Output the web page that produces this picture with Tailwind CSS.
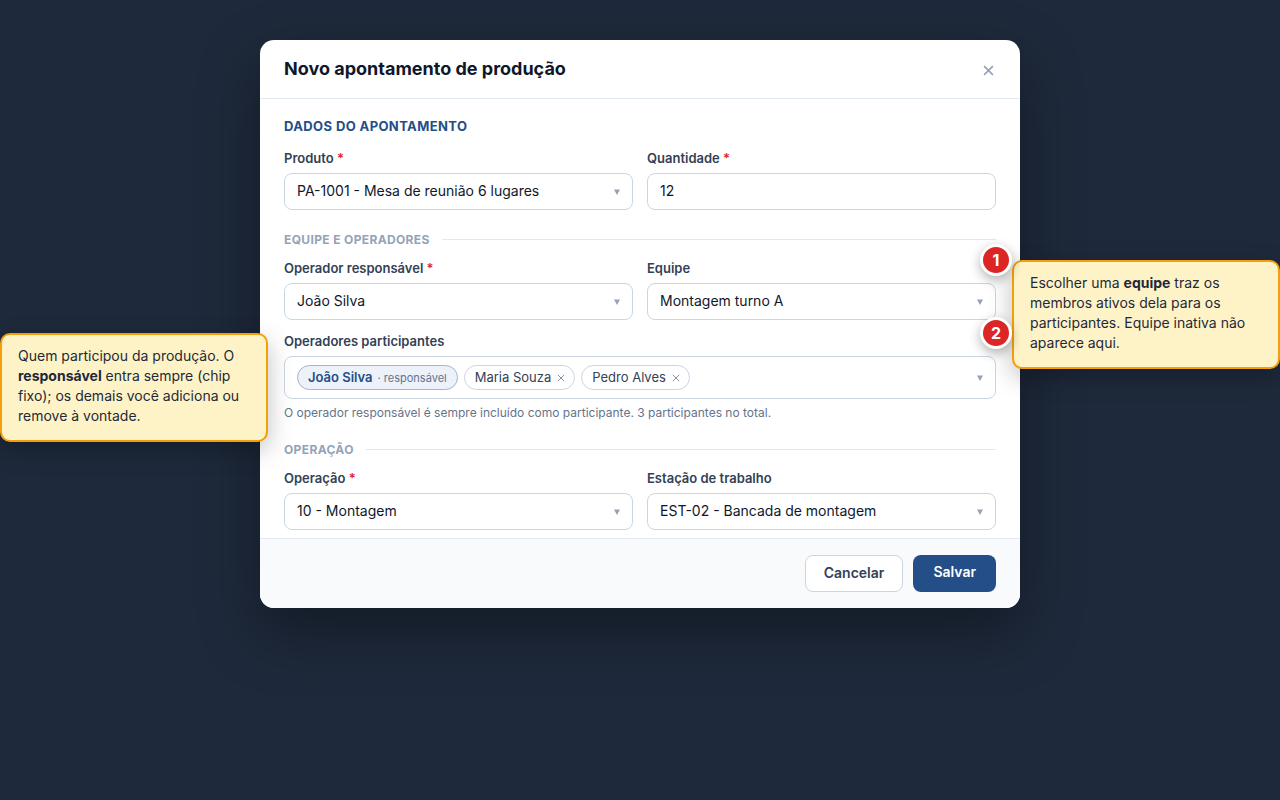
<!DOCTYPE html>
<html lang="pt-BR">
<head>
<meta charset="utf-8">
<meta name="viewport" content="width=device-width, initial-scale=1">
<title>Novo apontamento de produção</title>
<script src="https://cdn.jsdelivr.net/npm/@tailwindcss/browser@4"></script>
</head>
<body class="min-h-screen overflow-x-hidden bg-[#1e293b] font-[Inter,'Liberation_Sans',sans-serif] text-sm text-[#0f172a]">
<svg class="hidden" aria-hidden="true">
  <symbol id="caret" viewBox="0 0 6 6"><path d="M0 0.5h6L3 6z" fill="currentColor"/></symbol>
  <symbol id="cross" viewBox="0 0 10 10"><path d="M1 1l8 8M9 1l-8 8" stroke="currentColor" fill="none"/></symbol>
</svg>
<main class="flex justify-center pt-10">
  <div class="relative w-full max-w-[760px]">
    <form role="dialog" aria-labelledby="titulo" class="overflow-hidden rounded-[14px] bg-white shadow-[0_24px_60px_rgba(0,0,0,0.35)]">
      <header class="flex items-center justify-between border-b border-[#e2e8f0] px-6 py-[15px]">
        <h1 id="titulo" class="text-lg leading-7 font-bold">Novo apontamento de produção</h1>
        <button type="button" aria-label="Fechar" class="flex h-5 w-[15px] items-end justify-center pb-[3px] text-[#94a3b8]"><svg class="size-[11px] stroke-[1.5]"><use href="#cross"/></svg></button>
      </header>

      <div class="px-6 pt-[19px] pb-2">
        <h2 class="mb-3.5 text-[13px] leading-4 font-bold tracking-[0.03em] text-[#234e87]">DADOS DO APONTAMENTO</h2>
        <div class="grid grid-cols-2 gap-3.5">
          <div>
            <label for="produto" class="mb-[5px] block text-[13px] leading-5 font-semibold text-[#334155]">Produto <span class="text-[#dc2626]">*</span></label>
            <div class="grid items-center">
              <select id="produto" class="col-start-1 row-start-1 h-[37px] w-full appearance-none rounded-lg border border-[#cbd5e1] bg-white px-3 pb-0.5"><option>PA-1001 - Mesa de reunião 6 lugares</option></select>
              <svg class="pointer-events-none col-start-1 row-start-1 mr-[13px] size-1.5 justify-self-end text-[#94a3b8]"><use href="#caret"/></svg>
            </div>
          </div>
          <div>
            <label for="quantidade" class="mb-[5px] block text-[13px] leading-5 font-semibold text-[#334155]">Quantidade <span class="text-[#dc2626]">*</span></label>
            <input id="quantidade" type="text" value="12" class="block h-[37px] w-full rounded-lg border border-[#cbd5e1] bg-white px-3 pb-0.5">
          </div>
        </div>

        <h3 class="mt-[22px] mb-2.5 flex items-center gap-3 text-xs leading-4 font-bold tracking-[0.03em] text-[#94a3b8] after:mb-0.5 after:h-px after:flex-1 after:bg-[#e2e8f0]">EQUIPE E OPERADORES</h3>
        <div class="grid grid-cols-2 gap-3.5">
          <div>
            <label for="operador" class="mb-[5px] block text-[13px] leading-5 font-semibold text-[#334155]">Operador responsável <span class="text-[#dc2626]">*</span></label>
            <div class="grid items-center">
              <select id="operador" class="col-start-1 row-start-1 h-[37px] w-full appearance-none rounded-lg border border-[#cbd5e1] bg-white px-3 pb-0.5"><option>João Silva</option></select>
              <svg class="pointer-events-none col-start-1 row-start-1 mr-[13px] size-1.5 justify-self-end text-[#94a3b8]"><use href="#caret"/></svg>
            </div>
          </div>
          <div class="relative">
            <label for="equipe" class="mb-[5px] block text-[13px] leading-5 font-semibold text-[#334155]">Equipe</label>
            <div class="grid items-center">
              <select id="equipe" class="col-start-1 row-start-1 h-[37px] w-full appearance-none rounded-lg border border-[#cbd5e1] bg-white px-3 pb-0.5"><option>Montagem turno A</option></select>
              <svg class="pointer-events-none col-start-1 row-start-1 mr-[13px] size-1.5 justify-self-end text-[#94a3b8]"><use href="#caret"/></svg>
            </div>
            <span class="absolute -top-3.5 -right-4 z-10 flex size-8 items-center justify-center rounded-full border-3 border-white bg-[#dc2626] text-base font-bold text-white shadow-[0_4px_12px_rgba(0,0,0,0.3)]">1</span>
          </div>
        </div>

        <div class="relative mt-[11px]">
          <label for="participantes" class="mb-[5px] block text-[13px] leading-5 font-semibold text-[#334155]">Operadores participantes</label>
          <div class="flex items-center gap-1.5 rounded-lg border border-[#cbd5e1] bg-white px-3 py-2 text-[13px]">
            <span class="flex h-[25px] items-center gap-[5px] rounded-full border border-[#a3b4cf] bg-[#edf1f9] px-2.5 font-semibold text-[#234e87]">João Silva <span class="text-[11px] leading-4 font-normal text-[#64748b]">· responsável</span></span>
            <span class="flex h-[25px] items-center gap-1.5 rounded-full border border-[#cbd5e1] bg-white pr-[9px] pl-2.5 text-[#334155]">Maria Souza <button type="button" aria-label="Remover Maria Souza" class="pt-px text-[#64748b]"><svg class="size-2"><use href="#cross"/></svg></button></span>
            <span class="flex h-[25px] items-center gap-1.5 rounded-full border border-[#cbd5e1] bg-white pr-[9px] pl-2.5 text-[#334155]">Pedro Alves <button type="button" aria-label="Remover Pedro Alves" class="pt-px text-[#64748b]"><svg class="size-2"><use href="#cross"/></svg></button></span>
            <input id="participantes" type="text" class="min-w-0 flex-1 outline-none">
            <svg class="size-1.5 text-[#94a3b8]"><use href="#caret"/></svg>
          </div>
          <p class="mt-1.5 text-xs leading-4 text-[#64748b]">O operador responsável é sempre incluído como participante. 3 participantes no total.</p>
          <span class="absolute -top-3.5 -right-4 z-10 flex size-8 items-center justify-center rounded-full border-3 border-white bg-[#dc2626] text-base font-bold text-white shadow-[0_4px_12px_rgba(0,0,0,0.3)]">2</span>
        </div>

        <h3 class="mt-[21px] mb-2.5 flex items-center gap-3 text-xs leading-4 font-bold tracking-[0.03em] text-[#94a3b8] after:mb-0.5 after:h-px after:flex-1 after:bg-[#e2e8f0]">OPERAÇÃO</h3>
        <div class="grid grid-cols-2 gap-3.5">
          <div>
            <label for="operacao" class="mb-[5px] block text-[13px] leading-5 font-semibold text-[#334155]">Operação <span class="text-[#dc2626]">*</span></label>
            <div class="grid items-center">
              <select id="operacao" class="col-start-1 row-start-1 h-[37px] w-full appearance-none rounded-lg border border-[#cbd5e1] bg-white px-3 pb-0.5"><option>10 - Montagem</option></select>
              <svg class="pointer-events-none col-start-1 row-start-1 mr-[13px] size-1.5 justify-self-end text-[#94a3b8]"><use href="#caret"/></svg>
            </div>
          </div>
          <div>
            <label for="estacao" class="mb-[5px] block text-[13px] leading-5 font-semibold text-[#334155]">Estação de trabalho</label>
            <div class="grid items-center">
              <select id="estacao" class="col-start-1 row-start-1 h-[37px] w-full appearance-none rounded-lg border border-[#cbd5e1] bg-white px-3 pb-0.5"><option>EST-02 - Bancada de montagem</option></select>
              <svg class="pointer-events-none col-start-1 row-start-1 mr-[13px] size-1.5 justify-self-end text-[#94a3b8]"><use href="#caret"/></svg>
            </div>
          </div>
        </div>
      </div>

      <footer class="flex justify-end gap-2.5 border-t border-[#e2e8f0] bg-[#f8fafc] px-6 py-4 font-semibold">
        <button type="button" class="h-[37px] rounded-lg border border-[#cbd5e1] bg-white px-[18px] pb-0.5 text-[#334155]">Cancelar</button>
        <button type="submit" class="h-[37px] rounded-lg bg-[#234e87] px-5 pb-1 text-white">Salvar</button>
      </footer>
    </form>

    <aside class="absolute top-[293px] -left-[260px] w-[268px] rounded-[10px] border-2 border-[#f59e0b] bg-[#fef3c7] px-4 pt-[11px] pb-3.5 leading-5 text-[#1f2937] shadow-[0_8px_24px_rgba(0,0,0,0.25)]">Quem participou da produção. O <strong class="font-bold">responsável</strong> entra sempre (chip fixo); os demais você adiciona ou remove à vontade.</aside>
    <aside class="absolute top-[220px] -right-[260px] w-[268px] rounded-[10px] border-2 border-[#f59e0b] bg-[#fef3c7] px-4 pt-[11px] pb-3.5 leading-5 text-[#1f2937] shadow-[0_8px_24px_rgba(0,0,0,0.25)]">Escolher uma <strong class="font-bold">equipe</strong> traz os membros ativos dela para os participantes. Equipe inativa não aparece aqui.</aside>
  </div>
</main>
</body>
</html>
